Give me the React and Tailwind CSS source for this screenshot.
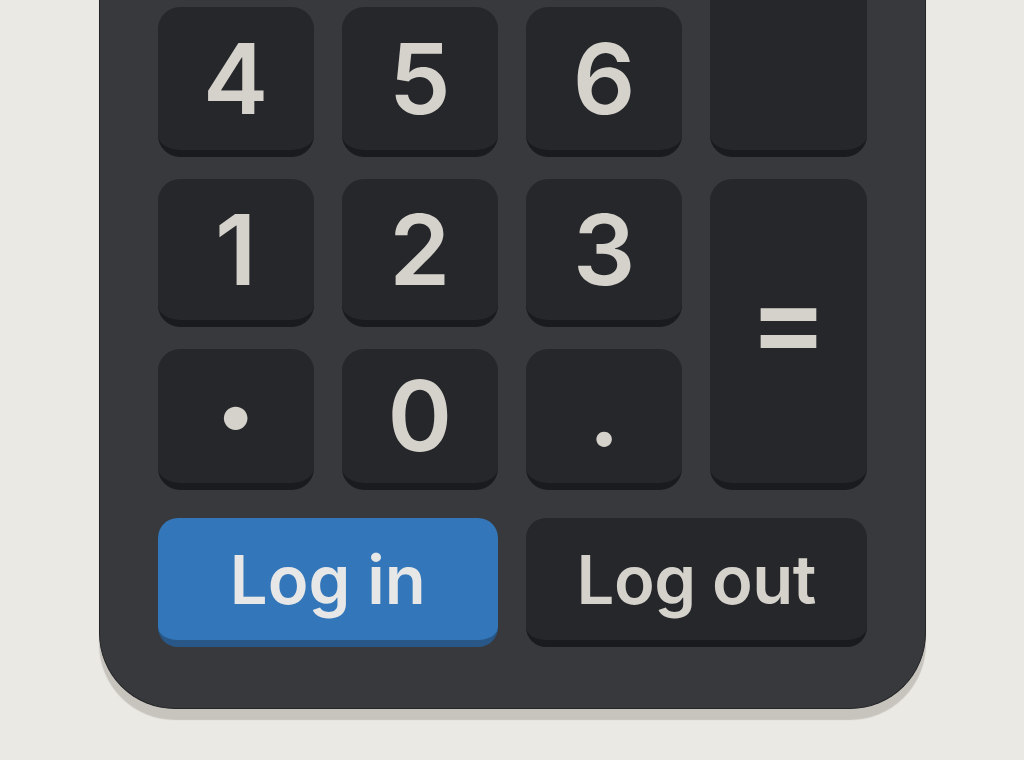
import React from "react";

const keyBase =
  "flex items-center justify-center rounded-[22px] border-b-[7px] border-[#1a1b1e] bg-[#25272b] text-[#d5d1cb] font-semibold leading-none select-none";

function Key({ label, className = "" }) {
  return <button className={`${keyBase} text-[98px] ${className}`}>{label}</button>;
}

export default function App() {
  return (
    <div
      className="flex h-[760px] w-full flex-col items-center justify-end overflow-hidden bg-[#ebe9e4]"
      style={{ fontFamily: "Inter, 'Noto Sans', sans-serif" }}
    >
      <div className="mb-[51px] w-[827px] rounded-b-[76px] border border-t-0 border-[#242528] bg-[#37393c] px-[58px] pb-[61px] pt-[28px] shadow-[0_11px_1px_#c7c4be]">
        <div className="grid grid-cols-4 grid-rows-[150px_150px_148px_141px] gap-x-[28px] gap-y-[22px]">
          <div />
          <div />
          <div />
          <Key label="−" className="col-start-4 row-start-1 row-span-2 pb-[22px] !text-[118px]" />

          <Key label="4" />
          <Key label="5" />
          <Key label="6" />

          <Key label="1" />
          <Key label="2" />
          <Key label="3" />
          <Key label="=" className="row-span-2 pb-[24px] !text-[118px]" />

          <Key label="·" className="!text-[150px] font-bold" />
          <Key label="0" />
          <Key label="." className="pb-[10px]" />
        </div>

        <div className="mt-[28px] grid h-[129px] grid-cols-2 gap-x-[28px]">
          <button className="flex items-center justify-center rounded-[20px] border-b-[7px] border-[#295787] bg-[#3376b9] text-[67px] font-semibold leading-none text-[#e6e7e6]">
            Log in
          </button>
          <button className="flex items-center justify-center rounded-[20px] border-b-[7px] border-[#1a1b1e] bg-[#25272b] text-[67px] font-semibold leading-none tracking-[-0.5px] text-[#d5d1cb]">
            Log out
          </button>
        </div>
      </div>
    </div>
  );
}
